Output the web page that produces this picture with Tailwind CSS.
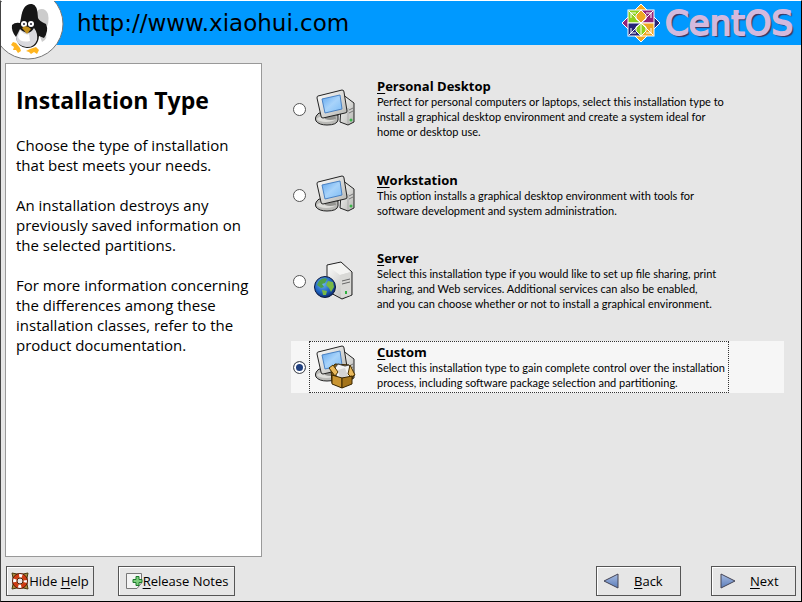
<!DOCTYPE html>
<html lang="en">
<head>
  <meta charset="UTF-8">
  <meta name="viewport" content="width=device-width, initial-scale=1.0">
  <title>Installation Type</title>
  <script src="https://cdn.jsdelivr.net/npm/@tailwindcss/browser@4"></script>
</head>
<body class="bg-[#e6e6e6] text-black font-['Open_Sans','Noto_Sans',sans-serif]">
  <!-- Shared drawings -->
  <svg class="absolute w-0 h-0">
    <defs>
      <linearGradient id="screen" x1="0" y1="0" x2="1" y2="1">
        <stop offset="0" stop-color="#5fa6ee"/><stop offset=".5" stop-color="#a8d3fa"/><stop offset="1" stop-color="#7cbcf5"/>
      </linearGradient>
      <linearGradient id="metal" x1="0" y1="0" x2="1" y2="1">
        <stop offset="0" stop-color="#ffffff"/><stop offset="1" stop-color="#b4b4b0"/>
      </linearGradient>
      <radialGradient id="sea" cx=".4" cy=".35" r=".7">
        <stop offset="0" stop-color="#6fb7f2"/><stop offset=".6" stop-color="#1e62c0"/><stop offset="1" stop-color="#0a2260"/>
      </radialGradient>
      <linearGradient id="arrow" x1="0" y1="0" x2="0" y2="1">
        <stop offset="0" stop-color="#a9bde2"/><stop offset="1" stop-color="#5a7cba"/>
      </linearGradient>
      <symbol id="computer" viewBox="0 0 42 40">
        <path d="M28 5 L40 14 V33 L34 36 L26 33 Z" fill="url(#metal)" stroke="#222" stroke-linejoin="round"/>
        <path d="M34 19 V35" stroke="#aaa" fill="none"/>
        <path d="M35 21 l4-2 M35 24 l4-2" stroke="#777" fill="none"/>
        <circle cx="37" cy="31" r="1.5" fill="#3bb44a"/>
        <path d="M5 24 Q0 28 2 32 Q5 36 13 36 Q23 36 24 31 V26Z" fill="#b9b9b6" stroke="#222"/>
        <ellipse cx="12" cy="30" rx="9" ry="3" fill="#dededb"/>
        <path d="M10 27 L21 25 L22 30 Q16 32 11 30Z" fill="#949491"/>
        <path d="M4 7 L28 1 Q30 1 30 3 L33 22 Q33 24 31 24 L9 29 Q7 29 7 27 L3 9 Q3 7 4 7Z" fill="url(#metal)" stroke="#222"/>
        <path d="M8 10 L26 6 L28 20 L11 24 Z" fill="url(#screen)" stroke="#4a82c4"/>
      </symbol>
      <symbol id="server" viewBox="0 0 42 40">
        <path d="M13 4 L27 1 L38 11 V34 L28 38 L13 30 Z" fill="url(#metal)" stroke="#222" stroke-linejoin="round"/>
        <path d="M14 5 L27 2 L37 11 L26 14 Z" fill="#f4f4f2"/>
        <path d="M26 14 L37 11 V34 L27 37 Z" fill="#d9d9d6"/>
        <path d="M28 20 l8-2 M28 23 l8-2" stroke="#666" fill="none"/>
        <rect x="31" y="30" width="2" height="3" fill="#30b040"/>
        <circle cx="11" cy="26" r="10.5" fill="url(#sea)" stroke="#0b1a40"/>
        <path d="M5 20 Q9 16 13 18 L11 22 L8 23 L10 26 L7 27 L3 24Z" fill="#4fa04a"/>
        <path d="M14 20 l5 1 1 5 -3 5 -2-4 -3-3Z M8 29 l5 1 -1 4 -3 0Z" fill="#78b845"/>
      </symbol>
    </defs>
  </svg>

  <div class="relative min-h-screen flex flex-col border border-t-white border-l-[#444] border-r-black border-b-black">
    <!-- Banner -->
    <header class="h-11 shrink-0 bg-[#0099ff] flex items-center justify-between pl-[76px] pr-2">
      <p class="text-[23px] leading-7 font-['DejaVu_Sans',sans-serif]">http://www.xiaohui.com</p>
      <div class="flex items-center gap-1">
        <svg class="w-10 h-10" viewBox="0 0 40 40">
          <g stroke="#fff" stroke-width="1">
            <path d="M20 1 L27 8 L20 15 L13 8Z" fill="#efa724"/>
            <path d="M39 20 L32 27 L25 20 L32 13Z" fill="#262577"/>
            <path d="M20 39 L13 32 L20 25 L27 32Z" fill="#efa724"/>
            <path d="M1 20 L8 13 L15 20 L8 27Z" fill="#932279"/>
            <rect x="7" y="7" width="13" height="13" fill="#8fd11c"/>
            <rect x="20" y="7" width="13" height="13" fill="#932279"/>
            <rect x="7" y="20" width="13" height="13" fill="#262577"/>
            <rect x="20" y="20" width="13" height="13" fill="#efa724"/>
            <path d="M20 7 V33 L15 28 V24 L20 20 L25 24 V28 L20 33" fill="#8fd11c"/>
            <path d="M20 7 L25 12 V16 L20 20 L15 16 V12Z" fill="#efa724"/>
            <path d="M8 8 L32 32 M32 8 L8 32 M10 15 V10 H15 M25 10 H30 V15 M10 25 V30 H15 M25 30 H30 V25" fill="none"/>
          </g>
        </svg>
        <span class="text-[34px] leading-10 text-[#d3b9dd] font-['DejaVu_Sans',sans-serif] [-webkit-text-stroke:2px_#d3b9dd] [text-shadow:2px_2px_1px_#3d3560]">CentOS</span>
      </div>
    </header>

    <!-- Penguin badge over the banner's left end -->
    <div class="absolute left-0 top-0 w-[63px] h-[59px] overflow-hidden">
      <svg class="w-full h-full" viewBox="0 0 63 59">
        <circle cx="27" cy="23" r="35" fill="#fff" stroke="#777"/>
        <path d="M37 9 Q44 6 47 13 Q49 22 44 29 Q48 38 41 41 L37 30Z" fill="#ccc"/>
        <path d="M20 17 Q22 2 31 3 Q37 4 37 17 Q38 20 45 23 Q48 30 43 37 L38 35 Q37 47 26 47 Q16 46 15 36 Q10 30 11 24 Q14 21 19 22Z" fill="#161616"/>
        <path d="M19 28 Q28 36 33 27 Q37 32 36 39 Q33 47 25 46 Q15 44 15 36Z" fill="#d9d9de"/>
        <path d="M19 29 Q25 35 28 33 L29 40 Q19 42 17 36Z" fill="#fff"/>
        <circle cx="23" cy="23" r="3" fill="#fff"/><circle cx="30" cy="23" r="3" fill="#fff"/>
        <circle cx="23" cy="23" r="1" fill="#223"/><circle cx="30" cy="23" r="1" fill="#223"/>
        <path d="M21 27 Q25 23 30 28 L26 33Z" fill="#c4901c"/>
        <path d="M12 41 L15 42 L19 47 L20 50 L17 52 L15 49 L12 49 L13 46 L10 44Z" fill="#ffb520"/>
        <path d="M29 48 L35 46 L38 49 L36 53 L33 51 L30 53 L28 51 L25 50Z" fill="#ffb520"/>
      </svg>
    </div>

    <main class="grow flex pt-[18px] pl-1">
      <!-- Help text -->
      <aside class="w-[257px] shrink-0 bg-white border border-[#999] pl-[10px] pt-[22px] text-[15px] leading-5">
        <h1 class="text-[23px] leading-7 font-bold mb-[21px]">Installation Type</h1>
        <p class="mb-5">Choose the type of installation<br>that best meets your needs.</p>
        <p class="mb-5">An installation destroys any<br>previously saved information on<br>the selected partitions.</p>
        <p>For more information concerning<br>the differences among these<br>installation classes, refer to the<br>product documentation.</p>
      </aside>

      <!-- Installation classes -->
      <form class="grow flex flex-col gap-[30px] pt-4 pl-[29px] pr-[17px] text-[11px] leading-[15px] font-['Lato',sans-serif] whitespace-nowrap">
        <div class="flex items-center pl-[2px]">
          <input type="radio" name="type" id="personal" class="appearance-none w-[13px] h-[13px] rounded-full bg-white border border-[#555] mr-[3px] shrink-0">
          <label for="personal" class="w-[420px] min-h-[52px] flex items-center pl-[5px]">
            <svg class="w-[42px] h-10 mr-[21px] shrink-0"><use href="#computer"/></svg>
            <span><b class="text-[13px] font-['Open_Sans',sans-serif]"><u class="underline-offset-2">P</u>ersonal Desktop</b><br>Perfect for personal computers or laptops, select this installation type to<br>install a graphical desktop environment and create a system ideal for<br>home or desktop use.</span>
          </label>
        </div>
        <div class="flex items-center pl-[2px]">
          <input type="radio" name="type" id="workstation" class="appearance-none w-[13px] h-[13px] rounded-full bg-white border border-[#555] mr-[3px] shrink-0">
          <label for="workstation" class="w-[420px] min-h-[52px] flex items-center pl-[5px]">
            <svg class="w-[42px] h-10 mr-[21px] shrink-0"><use href="#computer"/></svg>
            <span><b class="text-[13px] font-['Open_Sans',sans-serif]"><u class="underline-offset-2">W</u>orkstation</b><br>This option installs a graphical desktop environment with tools for<br>software development and system administration.</span>
          </label>
        </div>
        <div class="flex items-center pl-[2px]">
          <input type="radio" name="type" id="server-type" class="appearance-none w-[13px] h-[13px] rounded-full bg-white border border-[#555] mr-[3px] shrink-0">
          <label for="server-type" class="w-[420px] min-h-[52px] flex items-center pl-[5px]">
            <svg class="w-[42px] h-10 mr-[21px] shrink-0"><use href="#server"/></svg>
            <span><b class="text-[13px] font-['Open_Sans',sans-serif]"><u class="underline-offset-2">S</u>erver</b><br>Select this installation type if you would like to set up file sharing, print<br>sharing, and Web services. Additional services can also be enabled,<br>and you can choose whether or not to install a graphical environment.</span>
          </label>
        </div>
        <div class="flex items-center pl-[2px] bg-[#f6f6f6]">
          <input type="radio" name="type" id="custom" checked class="appearance-none w-[13px] h-[13px] rounded-full bg-[#1f3f7f] border border-[#555] shadow-[inset_0_0_0_2px_#fff] mr-[3px] shrink-0">
          <label for="custom" class="w-[420px] min-h-[52px] flex items-center pl-1 border border-dotted border-[#333]">
            <svg class="w-[42px] h-11 mr-[21px] shrink-0" viewBox="0 0 42 44">
              <use href="#computer" width="42" height="40"/>
              <path d="M17 24 L21 19 L35 20 L40 30 L37 36 L27 42 L18 38Z" fill="#8a6218" stroke="#3a2600"/>
              <path d="M20 24 L24 19 L31 21 L35 20 L37 26 L35 33 L23 33Z" fill="#f2f2f2" stroke="#444"/>
              <path d="M24 25 l7-2 3 8 -8 2Z" fill="#d4d4d4"/>
              <path d="M15 23 L19 20 L24 27 L21 31Z M34 29 L36 20 L41 30 L37 32Z" fill="#e9b95c" stroke="#4a3200"/>
              <path d="M18 30 L28 33 V43 L18 39Z" fill="#c99532" stroke="#3a2600"/>
              <path d="M28 33 L38 31 V39 L28 43Z" fill="#a4741a" stroke="#3a2600"/>
            </svg>
            <span><b class="text-[13px] font-['Open_Sans',sans-serif]"><u class="underline-offset-2">C</u>ustom</b><br>Select this installation type to gain complete control over the installation<br>process, including software package selection and partitioning.</span>
          </label>
        </div>
      </form>
    </main>

    <!-- Buttons -->
    <footer class="flex items-center justify-between pt-[9px] pb-[5px] pl-[5px] pr-[5px] text-[13px] leading-5">
      <div class="flex gap-6">
        <button class="w-[88px] h-[30px] flex items-center justify-center border border-[#555] shadow-[inset_1px_1px_0_#fff]">
          <svg class="w-[18px] h-[18px] shrink-0" viewBox="0 0 18 18">
            <path d="M1 1 L6 2 H12 L17 1 L16 6 V12 L17 17 L12 16 H6 L1 17 L2 12 V6Z" fill="#a88a3c" stroke="#4a3a10"/>
            <circle cx="9" cy="9" r="5.5" fill="none" stroke="#d03b12" stroke-width="4"/>
            <circle cx="9" cy="9" r="5.5" fill="none" stroke="#fff" stroke-width="4" stroke-dasharray="3.140 5.500" stroke-dashoffset="1.570"/>
            <circle cx="9" cy="9" r="7.5" fill="none" stroke="#5a1a08"/>
            <circle cx="9" cy="9" r="3" fill="#e6e6e6" stroke="#5a1a08"/>
          </svg>
          <span>Hide <u class="underline-offset-2">H</u>elp</span>
        </button>
        <button class="w-[117px] h-[30px] flex items-center justify-center border border-[#555] shadow-[inset_1px_1px_0_#fff]">
          <svg class="w-[18px] h-[18px] shrink-0" viewBox="0 0 18 18">
            <path d="M1.500 1.500 H16.500 V11 L12 16.500 H1.500Z" fill="#f4f4f4" stroke="#777"/>
            <path d="M11 4.500 h3 v3 h3 v3 h-3 v3 h-3 v-3 h-3 v-3 h3Z" fill="#7dcf7d" stroke="#1c7a2c"/>
          </svg>
          <span><u class="underline-offset-2">R</u>elease Notes</span>
        </button>
      </div>
      <div class="flex gap-[30px]">
        <button class="w-[85px] h-[30px] flex items-center pl-[6px] border border-[#555] shadow-[inset_1px_1px_0_#fff]">
          <svg class="w-4 h-4 mr-[15px]" viewBox="0 0 16 16"><path d="M15 1 V15 L1 8Z" fill="url(#arrow)" stroke="#445" stroke-linejoin="round"/></svg>
          <span><u class="underline-offset-2">B</u>ack</span>
        </button>
        <button class="w-[85px] h-[30px] flex items-center pl-2 border border-[#555] shadow-[inset_1px_1px_0_#fff]">
          <svg class="w-4 h-4 mr-[14px]" viewBox="0 0 16 16"><path d="M1 1 L15 8 L1 15Z" fill="url(#arrow)" stroke="#445" stroke-linejoin="round"/></svg>
          <span><u class="underline-offset-2">N</u>ext</span>
        </button>
      </div>
    </footer>
  </div>
</body>
</html>
